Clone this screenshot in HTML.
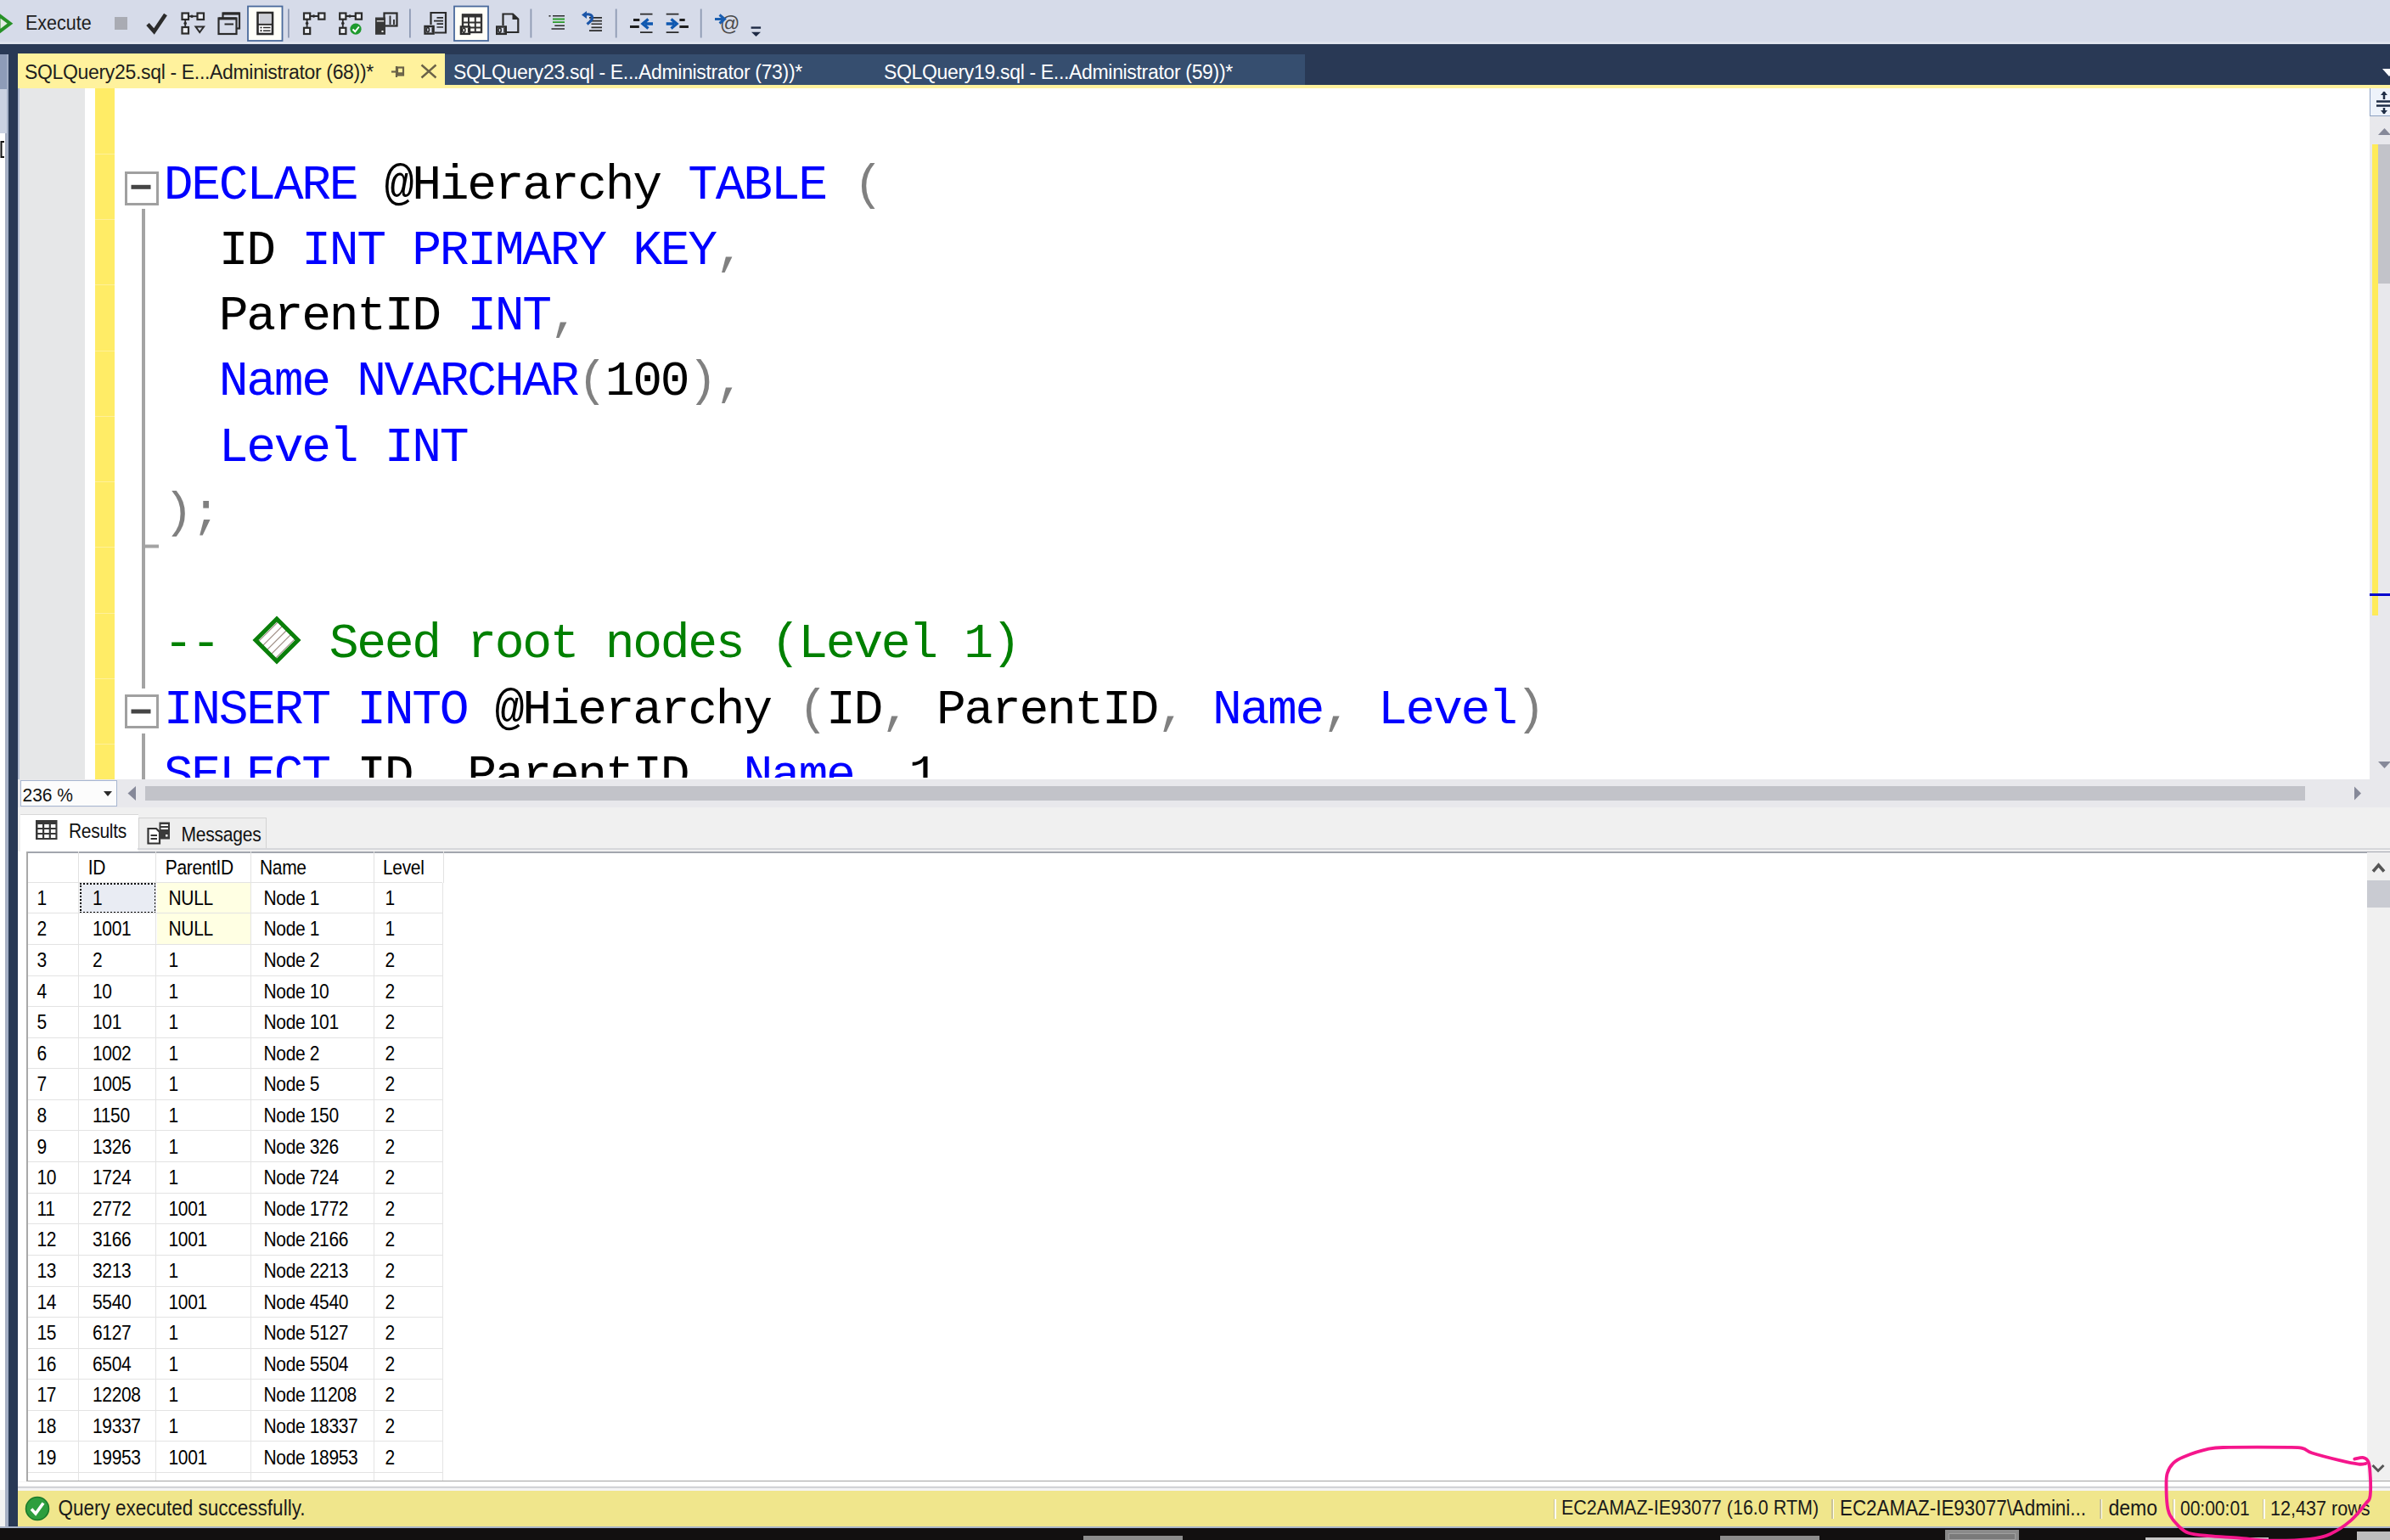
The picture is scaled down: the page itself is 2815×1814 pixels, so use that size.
<!DOCTYPE html>
<html><head><meta charset="utf-8"><style>
html,body{margin:0;padding:0;}
body{width:2815px;height:1814px;position:relative;overflow:hidden;background:#F0F0F0;font-family:"Liberation Sans",sans-serif;}
.a{position:absolute;}
.code{position:absolute;font-family:"Liberation Mono",monospace;font-size:58px;letter-spacing:-2.3px;white-space:pre;line-height:77px;height:77px;color:#000;}
.k{color:#0000FF;}.g{color:#808080;}.c{color:#008000;}
.gt{position:absolute;font-size:21px;letter-spacing:-0.35px;color:#000;white-space:nowrap;line-height:36px;height:36px;transform:scaleY(1.1);transform-origin:0 24.9px;}
.st{position:absolute;font-size:22px;color:#1A1A1A;white-space:nowrap;line-height:41px;top:0;transform:scaleY(1.14);transform-origin:0 27.9px;}
svg{position:absolute;overflow:visible;}
</style></head>
<body>
<div class="a" style="left:0px;top:0px;width:2815px;height:52px;background:#D6DBE9;"></div>
<div class="a" style="left:0px;top:49px;width:2815px;height:3px;background:#DFE3ED;"></div>
<div class="a" style="left:30px;top:11px;font-size:21.5px;line-height:34px;color:#1E1E1E;white-space:nowrap;transform:scaleY(1.12);transform-origin:0 24.1px;">Execute</div>
<svg style="left:0;top:0" width="910" height="52" viewBox="0 0 910 52">
<!-- play -->
<path d="M-1.5 17.5 L12 27.7 L-1.5 38 Z" fill="#E4ECE4" stroke="#279127" stroke-width="4" stroke-linejoin="miter"/>
<!-- stop -->
<rect x="135" y="20" width="15" height="15" fill="#A9ABB3"/>
<!-- check -->
<path d="M174 28.5 L181.5 37 L195 17" fill="none" stroke="#2B2B2B" stroke-width="4.6" stroke-linecap="butt" stroke-linejoin="miter"/>
<!-- est plan icon -->
<g fill="#EEF0F5" stroke="#2B2B2B" stroke-width="2.2">
<rect x="214.5" y="15.5" width="7.5" height="7.5"/><rect x="232.5" y="15.5" width="7.5" height="7.5"/><rect x="214.5" y="32" width="7.5" height="7.5"/>
</g>
<path d="M222.5 19.2 H232" stroke="#2B2B2B" stroke-width="1.8"/><circle cx="226" cy="19.2" r="1.8" fill="#2B2B2B"/>
<path d="M218.2 23.5 V31.5" stroke="#2B2B2B" stroke-width="1.8"/><circle cx="218.2" cy="27.5" r="1.8" fill="#2B2B2B"/>
<path d="M230.5 31.5 H240 L235.2 38 Z" fill="none" stroke="#2B2B2B" stroke-width="2"/>
<!-- stacked windows -->
<rect x="262.5" y="15.5" width="19.5" height="18" fill="none" stroke="#2B2B2B" stroke-width="2.2"/>
<rect x="262.5" y="14.6" width="19.5" height="3" fill="#2B2B2B"/>
<rect x="257.5" y="21.5" width="21" height="18.5" fill="#D6DBE9" stroke="#2B2B2B" stroke-width="2.2"/>
<rect x="257.5" y="20.4" width="21" height="3" fill="#2B2B2B"/>
<path d="M264.5 28.5 H275" stroke="#2B2B2B" stroke-width="2"/>
<!-- selected button 1 -->
<rect x="292" y="7.5" width="40.5" height="40.5" fill="#FFFFF8" stroke="#4A6A9C" stroke-width="1.8"/>
<rect x="303.5" y="15" width="17.5" height="25" fill="#FFFFFF" stroke="#2B2B2B" stroke-width="2.6"/>
<rect x="305.5" y="17" width="13.5" height="10.5" fill="#CDD0D8"/>
<path d="M303.5 28.8 H321" stroke="#2B2B2B" stroke-width="2"/>
<circle cx="307.5" cy="32.5" r="1.1" fill="#2B2B2B"/><circle cx="307.5" cy="36.2" r="1.1" fill="#2B2B2B"/>
<path d="M310 32.5 H318.5 M310 36.2 H318.5" stroke="#2B2B2B" stroke-width="1.6"/>
<!-- separator -->
<rect x="339" y="10.5" width="1.8" height="34" fill="#8E9AB3"/>
<!-- icon 7 -->
<g fill="#EEF0F5" stroke="#2B2B2B" stroke-width="2.2">
<rect x="358" y="15.5" width="7.2" height="7.2"/><rect x="375.2" y="15.5" width="7.2" height="7.2"/><rect x="358" y="32.8" width="7.2" height="7.2"/>
<rect x="400.2" y="15.5" width="7.2" height="7.2"/><rect x="418.8" y="15.5" width="7.2" height="7.2"/><rect x="400.2" y="32.8" width="7.2" height="7.2"/>
</g>
<path d="M365.5 19 H375 M361.6 23 V32.5 M407.5 19 H418.5 M403.8 23 V32.5" stroke="#2B2B2B" stroke-width="1.8"/>
<circle cx="369.5" cy="19" r="1.8" fill="#2B2B2B"/><circle cx="361.6" cy="27.5" r="1.8" fill="#2B2B2B"/>
<circle cx="412" cy="19" r="1.8" fill="#2B2B2B"/><circle cx="403.8" cy="27.5" r="1.8" fill="#2B2B2B"/>
<circle cx="419" cy="34.2" r="6.6" fill="#1E9A2E"/>
<path d="M415.5 34.5 L418.3 37.3 L422.8 31.5" fill="none" stroke="#FFFFFF" stroke-width="2"/>
<!-- server + chart -->
<rect x="452.5" y="15.5" width="15" height="15" fill="none" stroke="#2B2B2B" stroke-width="2.2"/>
<path d="M459.5 18.5 V29 M464 23 V29" stroke="#2B2B2B" stroke-width="1.8"/>
<rect x="442" y="20.5" width="12" height="20.3" fill="#383838"/>
<rect x="443.8" y="24" width="8.4" height="1.6" fill="#D0D0D0"/>
<rect x="449.5" y="36" width="2" height="2" fill="#FFFFFF"/>
<!-- separator -->
<rect x="482" y="10.5" width="1.8" height="34" fill="#8E9AB3"/>
<!-- results to text -->
<path d="M507.5 29 V15 H525 V38.5 H512" fill="none" stroke="#2B2B2B" stroke-width="2.2"/>
<path d="M514.5 20.9 H522 M511 24.6 H522 M514.5 28.2 H522 M514.5 32 H522" stroke="#2B2B2B" stroke-width="1.7"/>
<rect x="500.5" y="31.0" width="10.1" height="8.6" fill="#D6DBE9" stroke="#2B2B2B" stroke-width="2.4"/><ellipse cx="503.9" cy="35.1" rx="1.6" ry="2.6" fill="none" stroke="#2B2B2B" stroke-width="1.6"/><rect x="508.5" y="32.4" width="1.6" height="5.6" fill="#2B2B2B"/>
<!-- selected button 2 -->
<rect x="535" y="7.5" width="40" height="40.5" fill="#FFFFF8" stroke="#4A6A9C" stroke-width="1.8"/>
<rect x="545" y="17.5" width="22" height="20.5" fill="#FFFFF8" stroke="#333333" stroke-width="2.4"/><rect x="544" y="16.5" width="24" height="4" fill="#333333"/><path d="M544 26.6 H568 M544 32.4 H568 M552 20 V38 M559.8 20 V38" stroke="#333333" stroke-width="2"/>
<rect x="542.9" y="31.5" width="10.1" height="8.4" fill="#FFFFF8" stroke="#2B2B2B" stroke-width="2.4"/><ellipse cx="546.3" cy="35.6" rx="1.6" ry="2.6" fill="none" stroke="#2B2B2B" stroke-width="1.6"/><rect x="550.9" y="32.9" width="1.6" height="5.6" fill="#2B2B2B"/>
<!-- results to file -->
<path d="M592.5 30 V16.5 H604 L610.3 22.5 V38 H597" fill="none" stroke="#2B2B2B" stroke-width="2.2"/>
<path d="M603.5 16.5 L610.3 23 H603.5 Z" fill="#2B2B2B"/>
<rect x="585.2" y="31.5" width="10.6" height="8.4" fill="#D6DBE9" stroke="#2B2B2B" stroke-width="2.4"/><ellipse cx="588.6" cy="35.6" rx="1.6" ry="2.6" fill="none" stroke="#2B2B2B" stroke-width="1.6"/><rect x="593.2" y="32.9" width="1.6" height="5.6" fill="#2B2B2B"/>
<!-- separator -->
<rect x="624.5" y="10.5" width="1.8" height="34" fill="#8E9AB3"/>
<!-- comment -->
<path d="M651 18.8 H665 M653.3 30.3 H665 M649.5 34 H665" stroke="#2B2B2B" stroke-width="1.6"/>
<rect x="646.5" y="18" width="2" height="1.6" fill="#2B2B2B"/>
<path d="M651 22.5 H665 M651 26.2 H665" stroke="#2A9A2A" stroke-width="1.8"/>
<!-- uncomment -->
<path d="M694 20.9 H709 M694 24.6 H709 M696.5 28.2 H709 M696.5 32.4 H709 M694 36.1 H709" stroke="#2B2B2B" stroke-width="1.6"/>
<path d="M689 17.5 C694 15.5 698 18 697.5 21.5 C697 24.5 694 26.5 691.5 28.5" fill="none" stroke="#1B55A8" stroke-width="3.2"/>
<path d="M685 17.5 L691 13 L691 22 Z" fill="#1B55A8"/>
<!-- separator -->
<rect x="724.8" y="10.5" width="1.8" height="34" fill="#8E9AB3"/>
<!-- outdent -->
<path d="M754 16.7 H768.5 M754 38.2 H768.5" stroke="#2B2B2B" stroke-width="1.7"/>
<path d="M746 23.5 H753.3 M742 31.4 H752.8" stroke="#1E1E1E" stroke-width="3"/>
<path d="M769 28 H760 M763.5 22.5 L757 28 L763.5 33.5" fill="none" stroke="#0F58B0" stroke-width="3.4"/>
<!-- indent -->
<path d="M784.7 16.7 H799.4 M784.7 38.2 H799.4" stroke="#2B2B2B" stroke-width="1.7"/>
<path d="M800.4 23.5 H806.7 M800.4 31.4 H810.9" stroke="#1E1E1E" stroke-width="3"/>
<path d="M784.7 28 H794 M790.5 22.5 L797 28 L790.5 33.5" fill="none" stroke="#0F58B0" stroke-width="3.4"/>
<!-- separator -->
<rect x="824.8" y="10.5" width="1.8" height="34" fill="#8E9AB3"/>
<!-- template params -->
<text x="848" y="35.5" font-family="Liberation Sans" font-size="23" fill="#4A4A4A">@</text>
<path d="M842 22.5 H852 M847.5 17.5 L853.5 22.5 L847.5 27.5" fill="none" stroke="#1A5EB0" stroke-width="3"/>
<!-- dropdown -->
<path d="M884.6 32.6 H896.1" stroke="#1E2A45" stroke-width="2.4"/>
<path d="M885 37.8 H896 L890.5 43 Z" fill="#1E2A45"/>
</svg>

<div class="a" style="left:0px;top:52px;width:2815px;height:48px;background:#293955;"></div>
<div class="a" style="left:21px;top:63px;width:503px;height:41px;background:#FFF29D;"></div>
<div class="a" style="left:524px;top:64px;width:1013px;height:36px;background:#364E6F;"></div>
<div class="a" style="left:21px;top:100px;width:2794px;height:4px;background:#FFF29D;"></div>
<svg style="left:0;top:0" width="1" height="1"><path d="M2806 81 L2822 81 L2814 90 Z" fill="#FFFFFF"/></svg>
<div class="a" style="left:29px;top:67px;font-size:23px;letter-spacing:-0.33px;line-height:37px;color:#1E1E1E;white-space:nowrap;">SQLQuery25.sql - E...Administrator (68))*</div>
<div class="a" style="left:534px;top:67px;font-size:23px;letter-spacing:-0.33px;line-height:37px;color:#FFFFFF;white-space:nowrap;">SQLQuery23.sql - E...Administrator (73))*</div>
<div class="a" style="left:1041px;top:67px;font-size:23px;letter-spacing:-0.33px;line-height:37px;color:#FFFFFF;white-space:nowrap;">SQLQuery19.sql - E...Administrator (59))*</div>
<svg style="left:0;top:0" width="1" height="1"><g stroke="#6A6248" fill="none" stroke-width="2.2"><path d="M461 84.5 H467"/><path d="M467 78 V91"/><rect x="468" y="79.5" width="7" height="9"/><path d="M468 86.5 H475" stroke-width="2.5"/></g><g stroke="#6A6248" stroke-width="2.4"><path d="M496.5 76.5 L513.5 91.5 M513.5 76.5 L496.5 91.5"/></g></svg>
<div class="a" style="left:0px;top:52px;width:8px;height:12px;background:#293955;"></div>
<div class="a" style="left:0px;top:64px;width:8px;height:41px;background:#8E9CB8;"></div>
<div class="a" style="left:0px;top:105px;width:8px;height:52px;background:#C9D1E1;"></div>
<div class="a" style="left:0px;top:157px;width:7px;height:1641px;background:#FFFFFF;"></div>
<div class="a" style="left:0px;top:1755px;width:7px;height:43px;background:#F2F2F2;"></div>
<div class="a" style="left:6px;top:157px;width:2px;height:1641px;background:#A6AFC2;"></div>
<div class="a" style="left:8px;top:64px;width:2px;height:1736px;background:#A3AFC6;"></div>
<div class="a" style="left:9.5px;top:52px;width:11.5px;height:1748px;background:#293955;"></div>
<svg style="left:0;top:0" width="1" height="1"><path d="M5 167 H1.5 V185 H5" fill="none" stroke="#111" stroke-width="2"/></svg>
<div class="a" style="left:21px;top:104px;width:2770px;height:814px;background:#FFFFFF;"></div>
<div class="a" style="left:21px;top:104px;width:79px;height:814px;background:#E6E7E8;"></div>
<div class="a" style="left:21px;top:104px;width:1.5px;height:814px;background:#B3BED2;"></div>
<div class="a" style="left:112px;top:104px;width:23px;height:814px;background:#FFEC66;"></div>
<div class="a" style="left:112px;top:180.75px;width:23px;height:1px;background:#FFF09A;"></div>
<div class="a" style="left:112px;top:258.00px;width:23px;height:1px;background:#FFF09A;"></div>
<div class="a" style="left:112px;top:335.25px;width:23px;height:1px;background:#FFF09A;"></div>
<div class="a" style="left:112px;top:412.50px;width:23px;height:1px;background:#FFF09A;"></div>
<div class="a" style="left:112px;top:489.75px;width:23px;height:1px;background:#FFF09A;"></div>
<div class="a" style="left:112px;top:567.00px;width:23px;height:1px;background:#FFF09A;"></div>
<div class="a" style="left:112px;top:644.25px;width:23px;height:1px;background:#FFF09A;"></div>
<div class="a" style="left:112px;top:721.50px;width:23px;height:1px;background:#FFF09A;"></div>
<div class="a" style="left:112px;top:798.75px;width:23px;height:1px;background:#FFF09A;"></div>
<div class="a" style="left:112px;top:876.00px;width:23px;height:1px;background:#FFF09A;"></div>
<svg style="left:0;top:0" width="1" height="1"><rect x="148.5" y="203.5" width="37" height="37" fill="#FFFFFF" stroke="#A0A0A0" stroke-width="3"/><path d="M154.5 220.3 H177.5" stroke="#454545" stroke-width="5"/><path d="M169 246 V811" stroke="#A3A3A3" stroke-width="4"/><path d="M167 643.5 H187" stroke="#A3A3A3" stroke-width="4"/><rect x="148.5" y="819.5" width="37" height="37" fill="#FFFFFF" stroke="#A0A0A0" stroke-width="3"/><path d="M154.5 838 H177.5" stroke="#454545" stroke-width="5"/><path d="M169 864 V918" stroke="#A3A3A3" stroke-width="4"/></svg>
<div class="a" style="left:21px;top:104px;width:2770px;height:812px;overflow:hidden;">
<div class="code" style="left:171.70px;top:75.64px;"><span class="k">DECLARE</span> @Hierarchy <span class="k">TABLE</span> <span class="g">(</span></div>
<div class="code" style="left:171.70px;top:152.89px;">  ID <span class="k">INT</span> <span class="k">PRIMARY</span> <span class="k">KEY</span><span class="g">,</span></div>
<div class="code" style="left:171.70px;top:230.14px;">  ParentID <span class="k">INT</span><span class="g">,</span></div>
<div class="code" style="left:171.70px;top:307.39px;">  <span class="k">Name</span> <span class="k">NVARCHAR</span><span class="g">(</span>100<span class="g">),</span></div>
<div class="code" style="left:171.70px;top:384.64px;">  <span class="k">Level</span> <span class="k">INT</span></div>
<div class="code" style="left:171.70px;top:461.89px;"><span class="g">);</span></div>
<div class="code" style="left:171.70px;top:616.39px;"><span class="c">--</span></div>
<div class="code" style="left:171.70px;top:693.64px;"><span class="k">INSERT</span> <span class="k">INTO</span> @Hierarchy <span class="g">(</span>ID<span class="g">,</span> ParentID<span class="g">,</span> <span class="k">Name</span><span class="g">,</span> <span class="k">Level</span><span class="g">)</span></div>
<div class="code" style="left:171.70px;top:770.89px;"><span class="k">SELECT</span> ID<span class="g">,</span> ParentID<span class="g">,</span> <span class="k">Name</span><span class="g">,</span> 1</div>
<div class="code c" style="left:366.70px;top:616.39px;">Seed root nodes (Level 1)</div>
</div>
<svg style="left:0;top:0" width="1" height="1"><defs><clipPath id="dc"><path d="M326 731 L349 754 L326 777 L303 754 Z"/></clipPath></defs><g clip-path="url(#dc)" stroke="#A08F86" stroke-width="1.2"><path d="M300 770 L340 730 M305 775 L345 735 M310 780 L350 740 M315 785 L355 745 M295 765 L335 725"/></g><path d="M326 729 L351 754 L326 779 L301 754 Z" fill="none" stroke="#0A7F0A" stroke-width="5"/></svg>
<div class="a" style="left:2791px;top:104px;width:24px;height:814px;background:#E8E8EC;"></div>
<div class="a" style="left:2791px;top:104px;width:24px;height:33px;background:#EEF3FB;border-left:1.5px solid #8EA2C2;border-bottom:1.5px solid #8EA2C2;box-sizing:border-box;"></div>
<svg style="left:0;top:0" width="1" height="1"><g stroke="#1F2D45" stroke-width="2.5" fill="none"><path d="M2799 119.5 H2815 M2799 124.5 H2815 M2808 108 V117 M2808 127 V134"/></g><path d="M2804 112 L2808 107.5 L2812 112 Z M2804 130 L2808 134.5 L2812 130 Z" fill="#1F2D45"/><path d="M2801 159 L2808.5 151 L2816 159 Z" fill="#868999"/><path d="M2801 897 L2808.5 905 L2816 897 Z" fill="#868999"/></svg>
<div class="a" style="left:2801px;top:170px;width:14px;height:164px;background:#C2C3C9;"></div>
<div class="a" style="left:2793.5px;top:170px;width:7.5px;height:555px;background:#FFEB5A;"></div>
<div class="a" style="left:2791px;top:699px;width:24px;height:3px;background:#0000CD;"></div>
<div class="a" style="left:21px;top:918px;width:2794px;height:33px;background:#E8E8EC;"></div>
<div class="a" style="left:24px;top:918.5px;width:114px;height:31px;background:#FCFCFC;border:1.5px solid #A8B6D0;box-sizing:border-box;"></div>
<div class="a" style="left:26.5px;top:921px;font-size:21px;line-height:31px;color:#111;white-space:nowrap;transform:scaleY(1.08);transform-origin:0 22.4px;">236 %</div>
<svg style="left:0;top:0" width="1" height="1"><path d="M122 932 L132 932 L127 938 Z" fill="#2A2A2A"/><path d="M160 926 L150.5 934.5 L160 943 Z" fill="#868999"/><path d="M2773 926.5 L2781 934.5 L2773 942.5 Z" fill="#868999"/></svg>
<div class="a" style="left:171px;top:926px;width:2544px;height:17px;background:#C2C3C9;"></div>
<div class="a" style="left:21px;top:951px;width:2794px;height:805px;background:#F0F0F0;"></div>
<div class="a" style="left:21px;top:1003px;width:10px;height:742px;background:#FFFFFF;"></div>
<div class="a" style="left:24px;top:959px;width:139px;height:45px;background:#FFFFFF;border-top:1px solid #D8D8D8;box-sizing:border-box;"></div>
<div class="a" style="left:162.5px;top:962.5px;width:151px;height:37px;background:#EEEEEE;border:1px solid #D3D3D3;box-sizing:border-box;"></div>
<div class="a" style="left:81px;top:965.3px;font-size:21px;letter-spacing:-0.3px;line-height:30px;color:#111;white-space:nowrap;transform:scaleY(1.15);transform-origin:0 21.9px;">Results</div>
<div class="a" style="left:213.5px;top:968.6px;font-size:21px;letter-spacing:-0.2px;line-height:30px;color:#111;white-space:nowrap;transform:scaleY(1.15);transform-origin:0 21.9px;">Messages</div>
<svg style="left:0;top:0" width="1" height="1"><rect x="42" y="966" width="25.5" height="23" fill="#383838"/><rect x="44.5" y="971.0" width="5.5" height="4" fill="#FFFFFF"/><rect x="52.2" y="971.0" width="5.5" height="4" fill="#FFFFFF"/><rect x="59.9" y="971.0" width="5.5" height="4" fill="#FFFFFF"/><rect x="44.5" y="977.0" width="5.5" height="4" fill="#FFFFFF"/><rect x="52.2" y="977.0" width="5.5" height="4" fill="#FFFFFF"/><rect x="59.9" y="977.0" width="5.5" height="4" fill="#FFFFFF"/><rect x="44.5" y="983.0" width="5.5" height="4" fill="#FFFFFF"/><rect x="52.2" y="983.0" width="5.5" height="4" fill="#FFFFFF"/><rect x="59.9" y="983.0" width="5.5" height="4" fill="#FFFFFF"/><path d="M174.5 976 H184 L188 980 V993.5 H174.5 Z" fill="#FFFFFF" stroke="#333" stroke-width="2.2"/><path d="M177.5 984 H185 M177.5 988 H185" stroke="#333" stroke-width="1.8"/><rect x="187.5" y="968.5" width="12.5" height="20" fill="#3A3A3A"/><rect x="189.5" y="971" width="8.5" height="2" fill="#FFFFFF"/><rect x="189.5" y="975" width="8.5" height="2" fill="#FFFFFF"/><rect x="195" y="983" width="2.5" height="2.5" fill="#FFFFFF"/></svg>
<div class="a" style="left:31px;top:1003px;width:2784px;height:742px;background:#FFFFFF;"></div>
<div class="a" style="left:162px;top:999px;width:2653px;height:2px;background:#D6D7DB;"></div>
<div class="a" style="left:31px;top:1002.5px;width:2784px;height:2px;background:#A2A6AE;"></div>
<div class="a" style="left:31px;top:1003px;width:1.5px;height:742px;background:#A9A9A9;"></div>
<div class="a" style="left:31px;top:1744px;width:2784px;height:2px;background:#A9A9A9;"></div>
<div class="a" style="left:92.2px;top:1003px;width:1.2px;height:36.700000000000045px;background:#E2E2E2;"></div>
<div class="a" style="left:183.3px;top:1003px;width:1.2px;height:36.700000000000045px;background:#E2E2E2;"></div>
<div class="a" style="left:294.5px;top:1003px;width:1.2px;height:36.700000000000045px;background:#E2E2E2;"></div>
<div class="a" style="left:439.5px;top:1003px;width:1.2px;height:36.700000000000045px;background:#E2E2E2;"></div>
<div class="a" style="left:522.0px;top:1003px;width:1.2px;height:36.700000000000045px;background:#E2E2E2;"></div>
<div class="a" style="left:184.5px;top:1040.2px;width:110px;height:72.2px;background:#FFFFE3;"></div>
<div class="a" style="left:93.5px;top:1040.2px;width:90px;height:35.6px;background:#E9ECF3;outline:2px dotted #000;outline-offset:-2px;"></div>
<div class="a" style="left:32.5px;top:1039px;width:488.0px;height:1.2px;background:#E3E3E3;"></div>
<div class="a" style="left:32.5px;top:1075px;width:488.0px;height:1.2px;background:#E3E3E3;"></div>
<div class="a" style="left:32.5px;top:1112px;width:488.0px;height:1.2px;background:#E3E3E3;"></div>
<div class="a" style="left:32.5px;top:1149px;width:488.0px;height:1.2px;background:#E3E3E3;"></div>
<div class="a" style="left:32.5px;top:1185px;width:488.0px;height:1.2px;background:#E3E3E3;"></div>
<div class="a" style="left:32.5px;top:1222px;width:488.0px;height:1.2px;background:#E3E3E3;"></div>
<div class="a" style="left:32.5px;top:1258px;width:488.0px;height:1.2px;background:#E3E3E3;"></div>
<div class="a" style="left:32.5px;top:1295px;width:488.0px;height:1.2px;background:#E3E3E3;"></div>
<div class="a" style="left:32.5px;top:1331px;width:488.0px;height:1.2px;background:#E3E3E3;"></div>
<div class="a" style="left:32.5px;top:1368px;width:488.0px;height:1.2px;background:#E3E3E3;"></div>
<div class="a" style="left:32.5px;top:1405px;width:488.0px;height:1.2px;background:#E3E3E3;"></div>
<div class="a" style="left:32.5px;top:1441px;width:488.0px;height:1.2px;background:#E3E3E3;"></div>
<div class="a" style="left:32.5px;top:1478px;width:488.0px;height:1.2px;background:#E3E3E3;"></div>
<div class="a" style="left:32.5px;top:1515px;width:488.0px;height:1.2px;background:#E3E3E3;"></div>
<div class="a" style="left:32.5px;top:1551px;width:488.0px;height:1.2px;background:#E3E3E3;"></div>
<div class="a" style="left:32.5px;top:1588px;width:488.0px;height:1.2px;background:#E3E3E3;"></div>
<div class="a" style="left:32.5px;top:1624px;width:488.0px;height:1.2px;background:#E3E3E3;"></div>
<div class="a" style="left:32.5px;top:1661px;width:488.0px;height:1.2px;background:#E3E3E3;"></div>
<div class="a" style="left:32.5px;top:1697px;width:488.0px;height:1.2px;background:#E3E3E3;"></div>
<div class="a" style="left:32.5px;top:1734px;width:488.0px;height:1.2px;background:#E3E3E3;"></div>
<div class="a" style="left:92.2px;top:1039.7px;width:1.2px;height:704.3px;background:#E4E4E4;"></div>
<div class="a" style="left:183.3px;top:1039.7px;width:1.2px;height:704.3px;background:#E4E4E4;"></div>
<div class="a" style="left:294.5px;top:1039.7px;width:1.2px;height:704.3px;background:#E4E4E4;"></div>
<div class="a" style="left:439.5px;top:1039.7px;width:1.2px;height:704.3px;background:#E4E4E4;"></div>
<div class="a" style="left:520.5px;top:1039.7px;width:1.2px;height:704.3px;background:#E4E4E4;"></div>
<div class="gt" style="left:103.7px;top:1005px;">ID</div>
<div class="gt" style="left:194.8px;top:1005px;">ParentID</div>
<div class="gt" style="left:306.0px;top:1005px;">Name</div>
<div class="gt" style="left:451.0px;top:1005px;">Level</div>
<div class="gt" style="left:43.5px;top:1040.70px;">1</div>
<div class="gt" style="left:109px;top:1040.70px;">1</div>
<div class="gt" style="left:198.5px;top:1040.70px;">NULL</div>
<div class="gt" style="left:310.5px;top:1040.70px;">Node 1</div>
<div class="gt" style="left:453.5px;top:1040.70px;">1</div>
<div class="gt" style="left:43.5px;top:1077.30px;">2</div>
<div class="gt" style="left:109px;top:1077.30px;">1001</div>
<div class="gt" style="left:198.5px;top:1077.30px;">NULL</div>
<div class="gt" style="left:310.5px;top:1077.30px;">Node 1</div>
<div class="gt" style="left:453.5px;top:1077.30px;">1</div>
<div class="gt" style="left:43.5px;top:1113.90px;">3</div>
<div class="gt" style="left:109px;top:1113.90px;">2</div>
<div class="gt" style="left:198.5px;top:1113.90px;">1</div>
<div class="gt" style="left:310.5px;top:1113.90px;">Node 2</div>
<div class="gt" style="left:453.5px;top:1113.90px;">2</div>
<div class="gt" style="left:43.5px;top:1150.50px;">4</div>
<div class="gt" style="left:109px;top:1150.50px;">10</div>
<div class="gt" style="left:198.5px;top:1150.50px;">1</div>
<div class="gt" style="left:310.5px;top:1150.50px;">Node 10</div>
<div class="gt" style="left:453.5px;top:1150.50px;">2</div>
<div class="gt" style="left:43.5px;top:1187.10px;">5</div>
<div class="gt" style="left:109px;top:1187.10px;">101</div>
<div class="gt" style="left:198.5px;top:1187.10px;">1</div>
<div class="gt" style="left:310.5px;top:1187.10px;">Node 101</div>
<div class="gt" style="left:453.5px;top:1187.10px;">2</div>
<div class="gt" style="left:43.5px;top:1223.70px;">6</div>
<div class="gt" style="left:109px;top:1223.70px;">1002</div>
<div class="gt" style="left:198.5px;top:1223.70px;">1</div>
<div class="gt" style="left:310.5px;top:1223.70px;">Node 2</div>
<div class="gt" style="left:453.5px;top:1223.70px;">2</div>
<div class="gt" style="left:43.5px;top:1260.30px;">7</div>
<div class="gt" style="left:109px;top:1260.30px;">1005</div>
<div class="gt" style="left:198.5px;top:1260.30px;">1</div>
<div class="gt" style="left:310.5px;top:1260.30px;">Node 5</div>
<div class="gt" style="left:453.5px;top:1260.30px;">2</div>
<div class="gt" style="left:43.5px;top:1296.90px;">8</div>
<div class="gt" style="left:109px;top:1296.90px;">1150</div>
<div class="gt" style="left:198.5px;top:1296.90px;">1</div>
<div class="gt" style="left:310.5px;top:1296.90px;">Node 150</div>
<div class="gt" style="left:453.5px;top:1296.90px;">2</div>
<div class="gt" style="left:43.5px;top:1333.50px;">9</div>
<div class="gt" style="left:109px;top:1333.50px;">1326</div>
<div class="gt" style="left:198.5px;top:1333.50px;">1</div>
<div class="gt" style="left:310.5px;top:1333.50px;">Node 326</div>
<div class="gt" style="left:453.5px;top:1333.50px;">2</div>
<div class="gt" style="left:43.5px;top:1370.10px;">10</div>
<div class="gt" style="left:109px;top:1370.10px;">1724</div>
<div class="gt" style="left:198.5px;top:1370.10px;">1</div>
<div class="gt" style="left:310.5px;top:1370.10px;">Node 724</div>
<div class="gt" style="left:453.5px;top:1370.10px;">2</div>
<div class="gt" style="left:43.5px;top:1406.70px;">11</div>
<div class="gt" style="left:109px;top:1406.70px;">2772</div>
<div class="gt" style="left:198.5px;top:1406.70px;">1001</div>
<div class="gt" style="left:310.5px;top:1406.70px;">Node 1772</div>
<div class="gt" style="left:453.5px;top:1406.70px;">2</div>
<div class="gt" style="left:43.5px;top:1443.30px;">12</div>
<div class="gt" style="left:109px;top:1443.30px;">3166</div>
<div class="gt" style="left:198.5px;top:1443.30px;">1001</div>
<div class="gt" style="left:310.5px;top:1443.30px;">Node 2166</div>
<div class="gt" style="left:453.5px;top:1443.30px;">2</div>
<div class="gt" style="left:43.5px;top:1479.90px;">13</div>
<div class="gt" style="left:109px;top:1479.90px;">3213</div>
<div class="gt" style="left:198.5px;top:1479.90px;">1</div>
<div class="gt" style="left:310.5px;top:1479.90px;">Node 2213</div>
<div class="gt" style="left:453.5px;top:1479.90px;">2</div>
<div class="gt" style="left:43.5px;top:1516.50px;">14</div>
<div class="gt" style="left:109px;top:1516.50px;">5540</div>
<div class="gt" style="left:198.5px;top:1516.50px;">1001</div>
<div class="gt" style="left:310.5px;top:1516.50px;">Node 4540</div>
<div class="gt" style="left:453.5px;top:1516.50px;">2</div>
<div class="gt" style="left:43.5px;top:1553.10px;">15</div>
<div class="gt" style="left:109px;top:1553.10px;">6127</div>
<div class="gt" style="left:198.5px;top:1553.10px;">1</div>
<div class="gt" style="left:310.5px;top:1553.10px;">Node 5127</div>
<div class="gt" style="left:453.5px;top:1553.10px;">2</div>
<div class="gt" style="left:43.5px;top:1589.70px;">16</div>
<div class="gt" style="left:109px;top:1589.70px;">6504</div>
<div class="gt" style="left:198.5px;top:1589.70px;">1</div>
<div class="gt" style="left:310.5px;top:1589.70px;">Node 5504</div>
<div class="gt" style="left:453.5px;top:1589.70px;">2</div>
<div class="gt" style="left:43.5px;top:1626.30px;">17</div>
<div class="gt" style="left:109px;top:1626.30px;">12208</div>
<div class="gt" style="left:198.5px;top:1626.30px;">1</div>
<div class="gt" style="left:310.5px;top:1626.30px;">Node 11208</div>
<div class="gt" style="left:453.5px;top:1626.30px;">2</div>
<div class="gt" style="left:43.5px;top:1662.90px;">18</div>
<div class="gt" style="left:109px;top:1662.90px;">19337</div>
<div class="gt" style="left:198.5px;top:1662.90px;">1</div>
<div class="gt" style="left:310.5px;top:1662.90px;">Node 18337</div>
<div class="gt" style="left:453.5px;top:1662.90px;">2</div>
<div class="gt" style="left:43.5px;top:1699.50px;">19</div>
<div class="gt" style="left:109px;top:1699.50px;">19953</div>
<div class="gt" style="left:198.5px;top:1699.50px;">1001</div>
<div class="gt" style="left:310.5px;top:1699.50px;">Node 18953</div>
<div class="gt" style="left:453.5px;top:1699.50px;">2</div>
<div class="a" style="left:2787.5px;top:1004px;width:27.5px;height:740px;background:#F0F0F0;"></div>
<div class="a" style="left:2788px;top:1037px;width:27px;height:32px;background:#C9CBD2;"></div>
<svg style="left:0;top:0" width="1" height="1"><g fill="none" stroke="#555" stroke-width="3"><path d="M2795 1026.5 L2801.5 1019 L2808 1026.5" stroke-width="3.6"/><path d="M2794.5 1726 L2801 1732.5 L2807.5 1726"/></g></svg>
<div class="a" style="left:21px;top:1745px;width:2794px;height:11px;background:#F4F4F4;"></div>
<div class="a" style="left:21px;top:1746px;width:2794px;height:4px;background:#FFFFFF;"></div>
<div class="a" style="left:21px;top:1750.5px;width:2794px;height:2px;background:#D2D3D7;"></div>
<div class="a" style="left:21px;top:1756px;width:2794px;height:42px;background:#F0E68C;">
<div class="st" style="left:47.5px;top:0.5px;font-size:22.5px;">Query executed successfully.</div>
<div class="st" style="left:1818px;top:0.5px;font-size:21.5px;">EC2AMAZ-IE93077 (16.0 RTM)</div>
<div class="st" style="left:2146px;top:0.5px;font-size:22.4px;">EC2AMAZ-IE93077\Admini...</div>
<div class="st" style="left:2462.5px;top:0.5px;font-size:23px;">demo</div>
<div class="st" style="left:2547px;top:0.5px;font-size:21px;">00:00:01</div>
<div class="st" style="left:2653px;top:0.5px;font-size:21.6px;">12,437 rows</div>
<div class="a" style="left:1808.6px;top:10px;width:1.5px;height:23px;background:#C9C29A;"></div><div class="a" style="left:1810.1px;top:10px;width:1.5px;height:23px;background:#FFFFF0;"></div>
<div class="a" style="left:2136.0px;top:10px;width:1.5px;height:23px;background:#C9C29A;"></div><div class="a" style="left:2137.5px;top:10px;width:1.5px;height:23px;background:#FFFFF0;"></div>
<div class="a" style="left:2452.0px;top:10px;width:1.5px;height:23px;background:#C9C29A;"></div><div class="a" style="left:2453.5px;top:10px;width:1.5px;height:23px;background:#FFFFF0;"></div>
<div class="a" style="left:2537.8px;top:10px;width:1.5px;height:23px;background:#C9C29A;"></div><div class="a" style="left:2539.3px;top:10px;width:1.5px;height:23px;background:#FFFFF0;"></div>
<div class="a" style="left:2643.5px;top:10px;width:1.5px;height:23px;background:#C9C29A;"></div><div class="a" style="left:2645.0px;top:10px;width:1.5px;height:23px;background:#FFFFF0;"></div>
</div>
<svg style="left:0;top:0" width="1" height="1"><circle cx="44" cy="1777" r="13.5" fill="#2E9E3E" stroke="#1B7A2A" stroke-width="1.5"/><path d="M37 1777.5 L42 1783 L51 1770.5" fill="none" stroke="#FFFFFF" stroke-width="3.6"/></svg>
<div class="a" style="left:0px;top:1798px;width:2815px;height:2px;background:#A8B3C8;"></div>
<div class="a" style="left:0px;top:1800px;width:2815px;height:14px;background:#121010;"></div>
<div class="a" style="left:1276px;top:1809px;width:117px;height:5px;background:#8C8C8C;"></div>
<div class="a" style="left:2025.6px;top:1809.4px;width:117.59999999999991px;height:4.599999999999909px;background:#8C8C8C;"></div>
<div class="a" style="left:2290.8px;top:1802px;width:87.69999999999982px;height:12px;background:#8A8A8A;"></div>
<div class="a" style="left:2527px;top:1811px;width:145px;height:3px;background:#C8C8C8;"></div>
<div class="a" style="left:2775.6px;top:1804.3px;width:39.40000000000009px;height:9.700000000000045px;background:#BDBDBD;"></div>
<div class="a" style="left:2295px;top:1806px;width:79px;height:8px;background:#7A7A7A;border:1px solid #A0A0A0;box-sizing:border-box;"></div>
<svg style="left:0;top:0" width="1" height="1"><path d="M2773.3 1718.6 C2774.9 1718.3 2780.3 1716.6 2782.8 1716.8 C2785.3 1717.0 2786.8 1717.7 2788.2 1719.8 C2789.6 1721.9 2790.5 1722.5 2791.1 1729.4 C2791.7 1736.4 2792.5 1754.5 2791.7 1761.5 C2790.9 1768.5 2790.3 1766.1 2786.4 1771.1 C2782.5 1776.1 2775.5 1785.4 2768.5 1791.4 C2761.5 1797.4 2752.5 1803.3 2744.6 1806.9 C2736.7 1810.5 2732.7 1811.5 2720.8 1812.8 C2708.9 1814.1 2687.0 1814.8 2673.1 1814.6 C2659.2 1814.4 2649.2 1812.5 2637.3 1811.6 C2625.4 1810.7 2611.4 1810.2 2601.5 1809.2 C2591.6 1808.2 2583.6 1807.7 2577.7 1805.7 C2571.8 1803.7 2569.4 1800.7 2565.8 1797.3 C2562.2 1793.9 2558.4 1789.4 2556.2 1785.4 C2554.0 1781.4 2553.5 1779.5 2552.7 1773.5 C2551.9 1767.5 2551.5 1756.0 2551.5 1749.6 C2551.5 1743.2 2551.3 1739.7 2552.7 1735.3 C2554.1 1730.9 2556.6 1726.6 2559.8 1723.4 C2563.0 1720.2 2564.8 1719.0 2571.7 1716.2 C2578.6 1713.4 2592.6 1708.6 2601.5 1706.7 C2610.4 1704.8 2609.5 1705.2 2625.4 1704.9 C2641.3 1704.6 2682.4 1704.7 2696.9 1704.9 C2711.4 1705.1 2708.0 1705.0 2712.4 1706.1 C2716.8 1707.2 2715.8 1709.1 2723.2 1711.5 C2730.6 1713.9 2747.5 1718.2 2756.6 1720.4 C2765.7 1722.6 2773.0 1724.0 2778.0 1724.6 C2783.0 1725.2 2785.0 1724.1 2786.4 1724.0" fill="none" stroke="#F5168C" stroke-width="3.8" stroke-linecap="round" stroke-linejoin="round"/></svg>
</body></html>
